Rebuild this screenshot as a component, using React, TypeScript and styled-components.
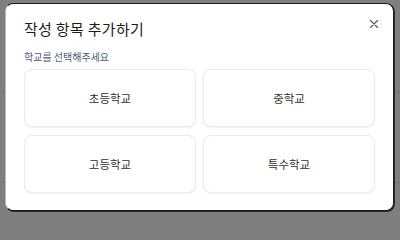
import React from 'react';
import styled, { createGlobalStyle } from 'styled-components';

const GlobalStyle = createGlobalStyle`
  html, body {
    margin: 0;
    padding: 0;
    background: #7f7f7f;
  }
  body {
    font-family: "Noto Sans CJK KR", "Noto Sans", sans-serif;
  }
`;

const Backdrop = styled.div`
  width: 400px;
  height: 214px;
  box-sizing: border-box;
  padding: 3px 6px 3px 5px;
  background:
    linear-gradient(#747474, #747474) 0 92px / 100% 1px no-repeat,
    linear-gradient(#747474, #747474) 0 182px / 100% 1px no-repeat,
    #7f7f7f;
`;

const Dialog = styled.div`
  position: relative;
  box-sizing: border-box;
  height: 208px;
  background: #fff;
  border-radius: 8px;
  border: 1px solid #1c1c1c;
  border-left-color: #b8b8b8;
  box-shadow: 1px 1px 0 0 #2a2a2a;
  padding: 15px 18px 0 18px;
`;

const Header = styled.div`
  display: flex;
  align-items: flex-start;
  justify-content: space-between;
`;

const Title = styled.h2`
  margin: 0;
  font-size: 15px;
  line-height: 20px;
  font-weight: 400;
  color: #1b1b1b;
  letter-spacing: 0.3px;
`;

const CloseButton = styled.button`
  position: absolute;
  top: 14px;
  right: 13px;
  width: 12px;
  height: 12px;
  padding: 0;
  border: none;
  background: none;
  display: flex;
  align-items: center;
  justify-content: center;
  cursor: pointer;
`;

const Subtitle = styled.p`
  margin: 11px 0 5px;
  font-size: 10px;
  line-height: 14px;
  color: #4b5a76;
`;

const Grid = styled.div`
  display: grid;
  grid-template-columns: 1fr 1fr;
  gap: 8px 7px;
`;

const Option = styled.button`
  height: 58px;
  box-sizing: border-box;
  border: 1px solid #ebebeb;
  border-radius: 8px;
  background: #fff;
  box-shadow: 0 1px 2px rgba(0, 0, 0, 0.06);
  font-family: inherit;
  font-size: 11.5px;
  color: #2e2e2e;
  cursor: pointer;
  display: flex;
  align-items: center;
  justify-content: center;
  padding: 0;
`;

const schools = ['초등학교', '중학교', '고등학교', '특수학교'];

export default function App() {
  return (
    <>
      <GlobalStyle />
      <Backdrop>
        <Dialog>
          <Header>
            <Title>작성 항목 추가하기</Title>
          </Header>
          <CloseButton aria-label="닫기">
            <svg width="8" height="8" viewBox="0 0 8 8">
              <path d="M0.5 0.5 L7.5 7.5 M7.5 0.5 L0.5 7.5" stroke="#555" strokeWidth="1.1" strokeLinecap="round" />
            </svg>
          </CloseButton>
          <Subtitle>학교를 선택해주세요</Subtitle>
          <Grid>
            {schools.map(s => (
              <Option key={s}>{s}</Option>
            ))}
          </Grid>
        </Dialog>
      </Backdrop>
    </>
  );
}
